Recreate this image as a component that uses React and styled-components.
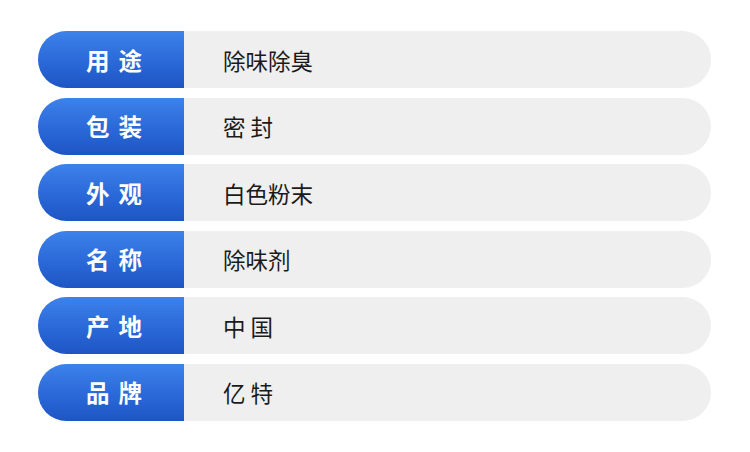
import styled, { createGlobalStyle } from 'styled-components';

const GlobalStyle = createGlobalStyle`
  body {
    margin: 0;
    background: #ffffff;
    font-family: "Noto Sans CJK SC", "Noto Sans", sans-serif;
  }
`;

const rows = [
  { label: '用途', value: '除味除臭' },
  { label: '包装', value: '密 封' },
  { label: '外观', value: '白色粉末' },
  { label: '名称', value: '除味剂' },
  { label: '产地', value: '中 国' },
  { label: '品牌', value: '亿 特' },
];

const App = () => (
  <Page>
    <GlobalStyle />
    <Table>
      {rows.map((row) => (
        <Row key={row.label}>
          <Label>{row.label}</Label>
          <Value>{row.value}</Value>
        </Row>
      ))}
    </Table>
  </Page>
);

const Page = styled.div`
  width: 750px;
  height: 452px;
  padding: 31px 39px 0 38px;
  box-sizing: border-box;
`;

const Table = styled.div`
  display: flex;
  flex-direction: column;
  gap: 9.6px;
`;

const Row = styled.div`
  display: flex;
  height: 57px;
  border-radius: 28.5px;
  overflow: hidden;
  background: #efefef;
`;

const Label = styled.div`
  width: 146px;
  flex-shrink: 0;
  display: flex;
  align-items: center;
  justify-content: center;
  padding-left: 6px;
  box-sizing: border-box;
  background: linear-gradient(180deg, #3d82ea 0%, #2a68d8 55%, #1e55c4 100%);
  color: #ffffff;
  font-size: 23.5px;
  font-weight: 700;
  letter-spacing: 9px;
  text-indent: 9px;
`;

const Value = styled.div`
  display: flex;
  align-items: center;
  padding-left: 39px;
  font-size: 22.5px;
  color: #1a1a1a;
`;

export default App;
